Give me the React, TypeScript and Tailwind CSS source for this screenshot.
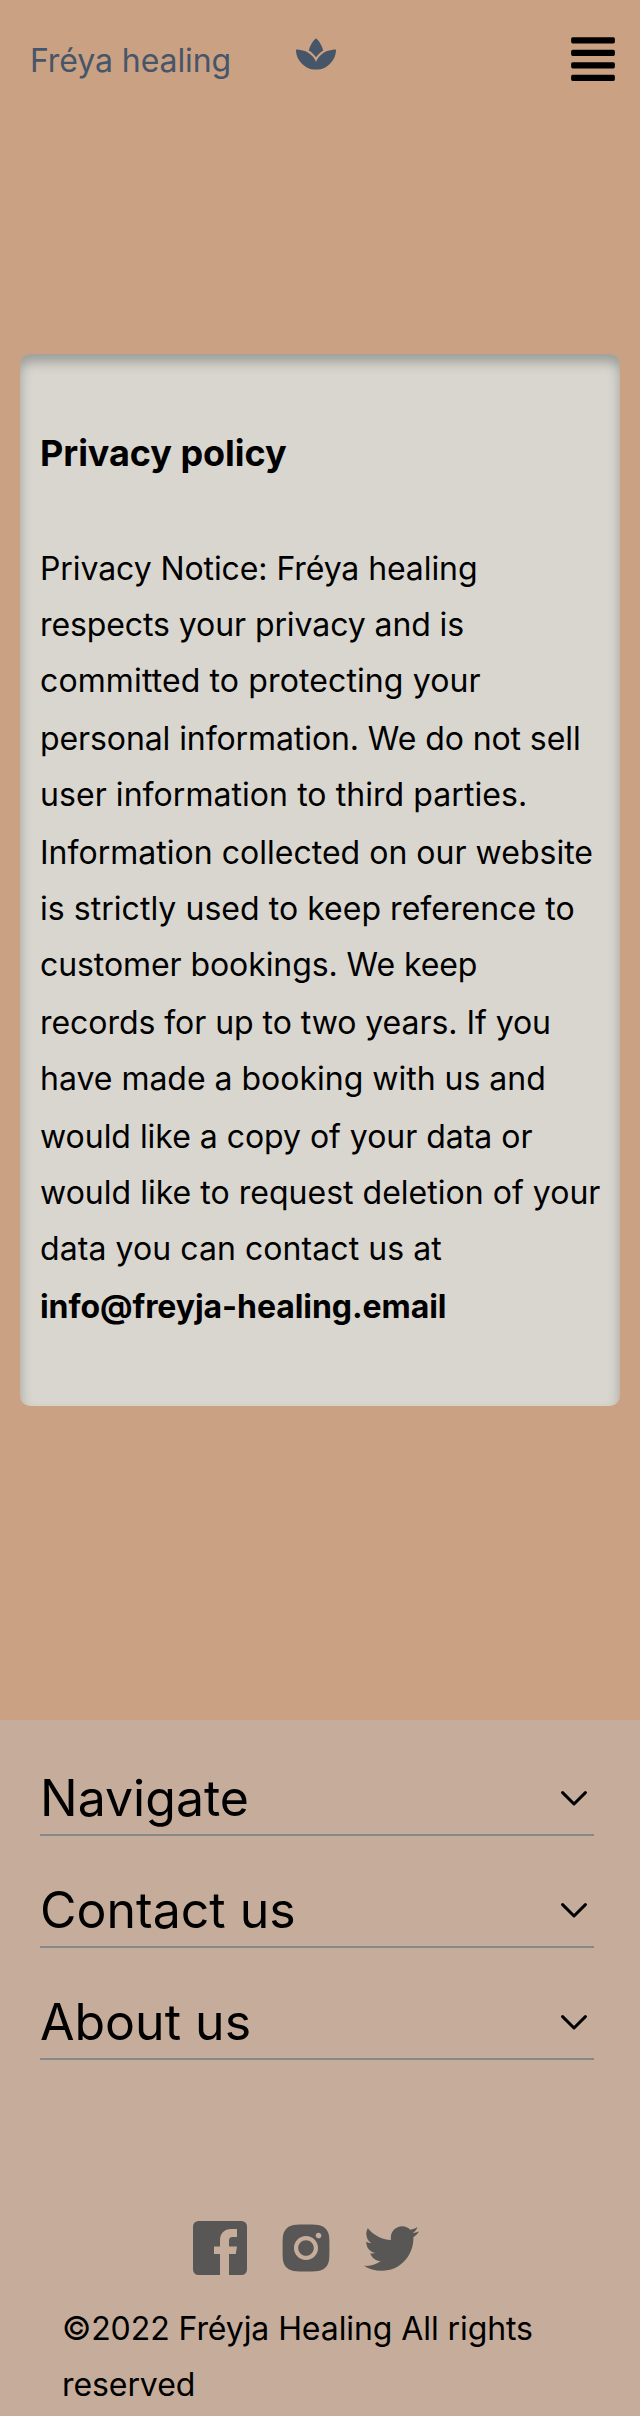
import { FaAlignJustify, FaSpa, FaTwitter } from "react-icons/fa";
import { AiFillInstagram } from "react-icons/ai";

const sections = ["Navigate", "Contact us", "About us"];

const notice = [
  { text: "Privacy Notice: Fréya healing", style: "h-14 tracking-[-0.09px]" },
  { text: "respects your privacy and is", style: "h-14 tracking-[-0.09px]" },
  { text: "committed to protecting your", style: "h-[58px] tracking-[0.12px]" },
  { text: "personal information. We do not sell", style: "h-14 tracking-[-0.09px]" },
  { text: "user information to third parties.", style: "h-[58px] tracking-[0.06px]" },
  { text: "Information collected on our website", style: "h-14 tracking-[0.02px]" },
  { text: "is strictly used to keep reference to", style: "h-14 tracking-[0.04px]" },
  { text: "customer bookings. We keep", style: "h-[58px] tracking-[-0.08px]" },
  { text: "records for up to two years. If you", style: "h-14 tracking-[-0.05px]" },
  { text: "have made a booking with us and", style: "h-[58px] tracking-[-0.01px]" },
  { text: "would like a copy of your data or", style: "h-14 tracking-[-0.03px]" },
  { text: "would like to request deletion of your", style: "h-14 tracking-[0.02px]" },
  { text: "data you can contact us at", style: "h-[58px] tracking-[0.07px]" },
];

function Chevron() {
  return (
    <svg className="mr-[7px] mt-1 h-[15px] w-[26px]" viewBox="0 0 26 15" fill="none" stroke="#000" strokeWidth="3" strokeLinecap="round" strokeLinejoin="round">
      <path d="M1.600 1.600 13 13 24.400 1.600" />
    </svg>
  );
}

function Facebook() {
  return (
    <svg className="size-[54px]" viewBox="0 0 54 54" fill="#585755">
      <path d="M48.500 0h-43A5.500 5.500 0 0 0 0 5.500v43A5.500 5.500 0 0 0 5.500 54H27V33h-6v-7.500h6v-6.300C27 12.200 31.600 8 38 8h6v8h-4.400c-2.800 0-3.600 1.400-3.600 3.700v5.800h8L42.700 33H36v21h12.500a5.500 5.500 0 0 0 5.500-5.500v-43A5.500 5.500 0 0 0 48.500 0Z" />
    </svg>
  );
}

export default function App() {
  return (
    <div className="flex h-[2416px] w-[640px] flex-col overflow-hidden bg-[#caa182] font-[Inter,sans-serif] text-[32px] leading-[57px] text-black">
      <header className="flex h-[354px] shrink-0 items-start pl-[30px] pr-[25px] pt-8">
        <span className="w-[266px] tracking-[-0.08px] text-[#475569]">Fréya healing</span>
        <FaSpa className="mt-1 h-9 w-10 text-[#475569]" />
        <FaAlignJustify className="ml-auto mt-0.5 h-[50px] w-[44px]" />
      </header>

      <main className="mx-5 h-[1052px] shrink-0 rounded-[10px] bg-[#d9d6cf] pl-5 pt-[69px] shadow-[inset_0_8px_12px_rgba(72,80,76,0.42)]">
        <h1 className="text-[36px] font-bold leading-[60px] tracking-[-0.06px]">Privacy policy</h1>
        <div className="mt-[57px] whitespace-nowrap">
          {notice.map((line) => (
            <p key={line.text} className={line.style}>{line.text}</p>
          ))}
          <p className="font-bold tracking-[-0.06px]">info@freyja-healing.email</p>
        </div>
      </main>

      <footer className="mt-[314px] h-[696px] shrink-0 bg-[#c6ad9b] pt-[38px]">
        {sections.map((title) => (
          <button key={title} className="mb-[34px] ml-10 flex h-[78px] w-[554px] items-center justify-between border-b-2 border-[#888] text-left text-[50px] leading-[76px]">
            <span className="pt-1">{title}</span>
            <Chevron />
          </button>
        ))}
        <div className="ml-[193px] mt-[161px] flex h-[54px] items-center text-[#585755]">
          <Facebook />
          <AiFillInstagram className="ml-[29px] size-[60px]" />
          <FaTwitter className="ml-[28px] size-[55px]" />
        </div>
        <div className="ml-[62px] mt-[25px] whitespace-nowrap">
          <p className="h-14 tracking-[-0.08px]">©2022 Fréyja Healing All rights</p>
          <p className="tracking-[-0.08px]">reserved</p>
        </div>
      </footer>
    </div>
  );
}
